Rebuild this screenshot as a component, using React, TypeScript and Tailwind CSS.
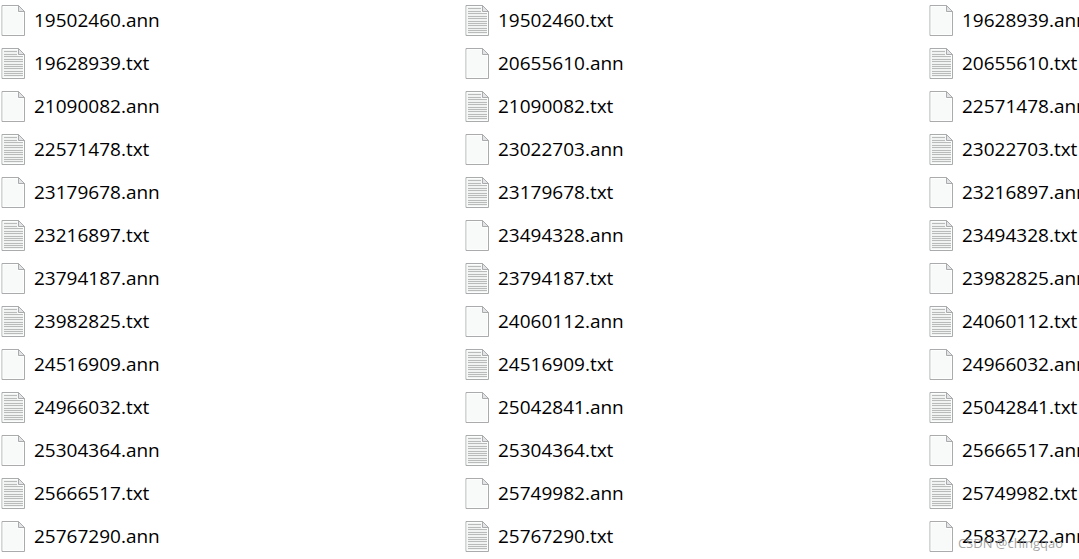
type FileKind = 'ann' | 'txt';

const FILE_NAMES = [
  '19502460.ann', '19502460.txt', '19628939.ann',
  '19628939.txt', '20655610.ann', '20655610.txt',
  '21090082.ann', '21090082.txt', '22571478.ann',
  '22571478.txt', '23022703.ann', '23022703.txt',
  '23179678.ann', '23179678.txt', '23216897.ann',
  '23216897.txt', '23494328.ann', '23494328.txt',
  '23794187.ann', '23794187.txt', '23982825.ann',
  '23982825.txt', '24060112.ann', '24060112.txt',
  '24516909.ann', '24516909.txt', '24966032.ann',
  '24966032.txt', '25042841.ann', '25042841.txt',
  '25304364.ann', '25304364.txt', '25666517.ann',
  '25666517.txt', '25749982.ann', '25749982.txt',
  '25767290.ann', '25767290.txt', '25837272.ann',
];

// y of each printed line on a text document
const LINES = [4, 7, 9, 12, 14, 17, 19, 21, 24, 26, 28];

function FileIcon({ kind }: { kind: FileKind }) {
  const isText = kind === 'txt';

  return (
    <svg
      xmlns="http://www.w3.org/2000/svg"
      viewBox="0 0 24 32"
      className="h-8 w-6 flex-shrink-0"
      aria-hidden="true"
    >
      {/* Sheet */}
      <path
        d="M1 1.5h16.5l6 6v24h-22.5z"
        fill={isText ? '#f1f2f2' : '#f8f9f9'}
        stroke="#a9abac"
      />
      <path d="M2 2.5h15v6h5.5v22h-20.5z" fill="none" stroke="#ffffff" strokeOpacity=".8" />
      {isText &&
        LINES.map((y) => (
          <path
            key={y}
            d={y < 8 ? `M3 ${y + 0.5}h13` : `M3 ${y + 0.5}h19`}
            stroke="#b9bbbb"
          />
        ))}
      {/* Folded corner */}
      <path d="M17.5 1.5v6h6z" fill="#e2e4e5" stroke="#a9abac" />
    </svg>
  );
}

export default function App() {
  return (
    <main className="relative overflow-hidden bg-white pb-[3px] pl-px font-['Open_Sans','Noto_Sans',sans-serif] text-black">
      <ul className="grid grid-cols-[repeat(3,464px)] gap-y-[3px]">
        {FILE_NAMES.map((name) => (
          <li key={name} className="flex h-10 items-center gap-[9px] text-[19px] leading-6">
            <FileIcon kind={name.endsWith('.txt') ? 'txt' : 'ann'} />
            <span className="whitespace-nowrap">{name}</span>
          </li>
        ))}
      </ul>

      <p className="absolute right-4 bottom-1.5 text-[13px] leading-5 text-[#8c8c8c]/80">
        CSDN @chingqao
      </p>
    </main>
  );
}
